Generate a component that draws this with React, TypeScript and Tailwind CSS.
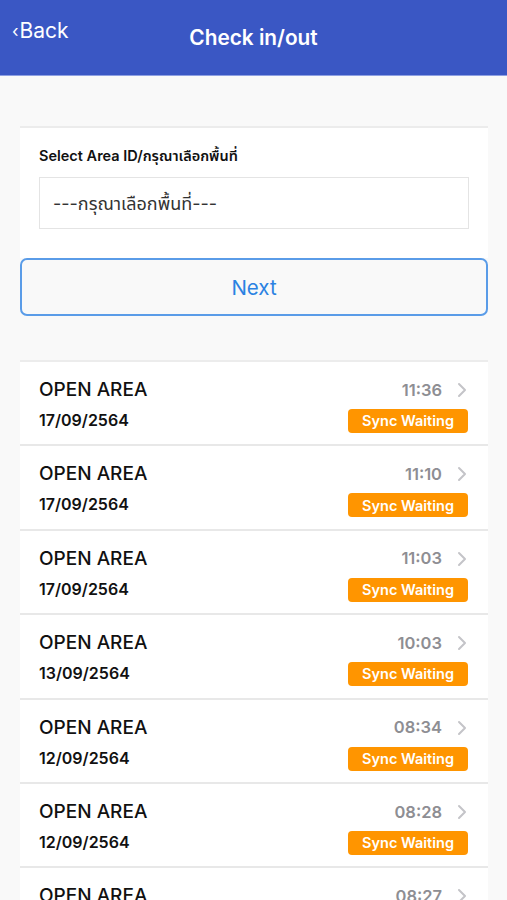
import React from "react";

const rows = [
  { time: "11:36", date: "17/09/2564" },
  { time: "11:10", date: "17/09/2564" },
  { time: "11:03", date: "17/09/2564" },
  { time: "10:03", date: "13/09/2564" },
  { time: "08:34", date: "12/09/2564" },
  { time: "08:28", date: "12/09/2564" },
  { time: "08:27", date: "12/09/2564" },
];

function Chevron() {
  return (
    <svg width="10" height="16" viewBox="0 0 10 16" fill="none">
      <path d="M2 2l6 6-6 6" stroke="#c4c4c8" strokeWidth="2" strokeLinecap="round" strokeLinejoin="round" />
    </svg>
  );
}

export default function App() {
  return (
    <div
      className="w-[507px] h-[900px] overflow-hidden bg-[#f9f9f9]"
      style={{ fontFamily: 'Inter, "Noto Sans Thai", "Noto Sans", sans-serif' }}
    >
      <header className="h-[76px] bg-[#3a57c4] border-b border-[#8ea0e2] relative flex justify-center">
        <div className="absolute left-[12px] top-[17px] text-white text-[21px] leading-[28px] flex items-center">
          <span className="text-[17px] mr-[1px]">‹</span>Back
        </div>
        <div className="mt-[24px] text-white text-[20.8px] leading-[28px] font-semibold">Check in/out</div>
      </header>

      <div className="mx-[20px] w-[468px]">
        <div className="mt-[50px] bg-white border-t-2 border-[#ececec] px-[19px] pt-[19px] pb-[29px]">
          <div className="text-[14.5px] leading-[18px] font-semibold text-[#111]">Select Area ID/กรุณาเลือกพื้นที่</div>
          <div className="mt-[12px] h-[52px] border border-[#e4e4e4] flex items-center px-[13px] text-[18px] text-[#333]">
            ---กรุณาเลือกพื้นที่---
          </div>
        </div>

        <button className="w-full h-[58px] pt-[3px] border-2 border-[#5a9ce8] rounded-[7px] flex items-center justify-center text-[20.5px] text-[#2b82e2]">
          Next
        </button>

        <div className="mt-[44px] border-t-2 border-[#ececec]">
          {rows.map((r, i) => (
            <div key={i} className="h-[84.4px] bg-white border-b-2 border-[#e8e8e8] pl-[19px] pr-[20px] pt-[16px] flex justify-between">
              <div>
                <div className="text-[19px] leading-[24px] font-medium text-[#111]">OPEN AREA</div>
                <div className="mt-[7px] text-[16px] leading-[22px] font-semibold text-[#111]">{r.date}</div>
              </div>
              <div className="flex flex-col items-end">
                <div className="flex items-center h-[24px]">
                  <span className="text-[16.5px] font-semibold text-[#8e8e93]">{r.time}</span>
                  <span className="ml-[15px] mr-[1px]"><Chevron /></span>
                </div>
                <div className="mt-[7px] h-[24px] w-[120px] rounded-[4px] bg-[#ff9500] text-white text-[14.5px] font-semibold flex items-center justify-center">
                  Sync Waiting
                </div>
              </div>
            </div>
          ))}
        </div>
      </div>
    </div>
  );
}
